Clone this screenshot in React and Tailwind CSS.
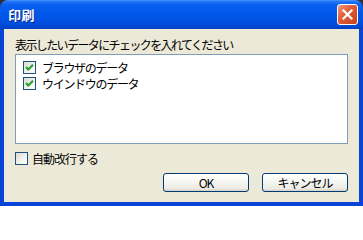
import React, { useState } from "react";

const font = { fontFamily: '"MS UI Gothic", "Noto Sans CJK JP", "Noto Sans", sans-serif' };

function XpCheck({ checked, onClick }) {
  return (
    <button
      onClick={onClick}
      className="w-[13px] h-[13px] shrink-0 border border-[#1c5180] bg-[linear-gradient(135deg,#dcdcd5,#f4f4f0_60%,#ffffff)] flex items-center justify-center"
    >
      {checked && (
        <svg width="11" height="11" viewBox="0 0 11 11">
          <path d="M2 5 L4.3 7.5 L9 2.8" fill="none" stroke="#21a121" strokeWidth="2" />
        </svg>
      )}
    </button>
  );
}

function XpButton({ children }) {
  return (
    <button className="w-[86px] h-[19px] rounded-[3px] border border-[#003c74] bg-[linear-gradient(to_bottom,#ffffff,#f5f5f1_50%,#ecebe4_85%,#d6d0c5)] text-[12px] leading-[17px] tracking-[-1px] text-black">
      {children}
    </button>
  );
}

export default function App() {
  const [items, setItems] = useState([
    { id: 1, name: "ブラウザのデータ", checked: true },
    { id: 2, name: "ウインドウのデータ", checked: true },
  ]);
  const [wrap, setWrap] = useState(false);

  const toggle = (id) => {
    setItems((current) =>
      current.map((item) => (item.id == id ? { ...item, checked: !item.checked } : item))
    );
  };

  return (
    <div className="w-[363px] h-[206px] bg-[#2f2f2f]" style={font}>
      <div className="w-[363px] h-[206px] rounded-t-[8px] overflow-hidden">
        {/* title bar */}
        <div className="h-[29px] flex items-center justify-between pl-[8px] pr-[5px] bg-[linear-gradient(to_bottom,#4a95fb_0px,#1a6ef5_2px,#0a5ff0_5px,#0058ea_12px,#0053e6_20px,#004ada_25px,#0040c4_29px)]">
          <span className="text-white text-[13px] font-bold leading-[16px] tracking-[0.5px] [text-shadow:1px_1px_0_#0a2a8a]">
            印刷
          </span>
          <button className="w-[21px] h-[21px] rounded-[3px] border border-white bg-[linear-gradient(135deg,#f09a7a,#e0603a_40%,#c8401c)] flex items-center justify-center">
            <svg width="13" height="13" viewBox="0 0 13 13">
              <path d="M2.5 2.5 L10.5 10.5 M10.5 2.5 L2.5 10.5" stroke="#ffffff" strokeWidth="2.2" strokeLinecap="square" />
            </svg>
          </button>
        </div>

        {/* body */}
        <div className="h-[177px] border-x-4 border-b-4 border-[#0845d6] bg-[#ece9d8] text-[12px] tracking-[-1.3px] text-black">
          <div className="pt-[9px] pl-[11px] h-[23px] leading-[14px] tracking-[-1.6px]">
            表示したいデータにチェックを入れてください
          </div>
          <div className="mt-[2px] mx-[11px] h-[90px] border border-[#7f9db9] bg-white pt-[6px] pl-[7px]">
            {items.map((item) => (
              <div key={item.id} className="h-[16px] flex items-start gap-x-[6px]">
                <XpCheck checked={item.checked} onClick={() => toggle(item.id)} />
                <span className="leading-[13px]">{item.name}</span>
              </div>
            ))}
          </div>
          <div className="mt-[8px] ml-[11px] h-[13px] flex items-center gap-x-[4px]">
            <XpCheck checked={wrap} onClick={() => setWrap(!wrap)} />
            <span className="leading-[13px] tracking-[-1px]">自動改行する</span>
          </div>
          <div className="mt-[8px] pr-[11px] h-[19px] flex justify-end gap-x-[13px]">
            <XpButton>OK</XpButton>
            <XpButton>キャンセル</XpButton>
          </div>
        </div>
      </div>
    </div>
  );
}
